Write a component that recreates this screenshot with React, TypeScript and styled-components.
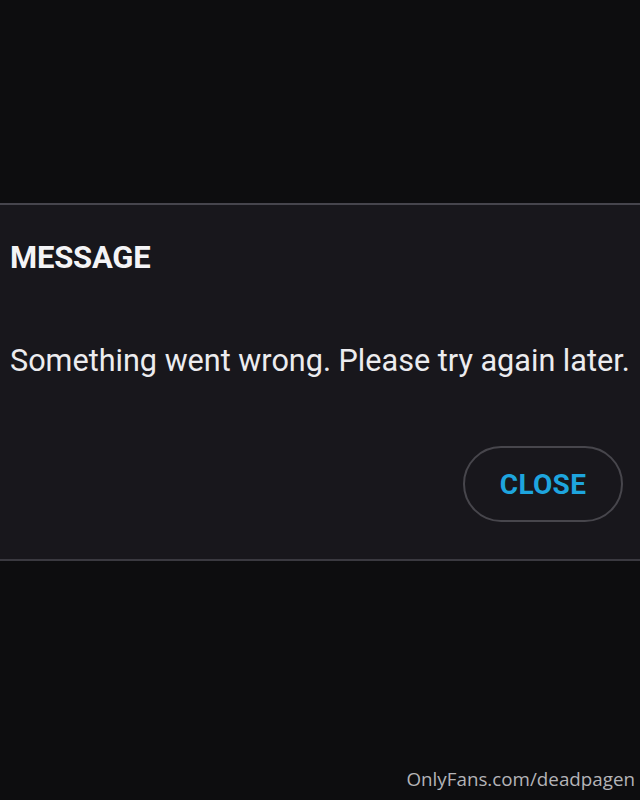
import React from 'react';
import styled, { createGlobalStyle } from 'styled-components';

const GlobalStyle = createGlobalStyle`
  html, body {
    margin: 0;
    padding: 0;
    background: #0d0d0f;
  }
  #root {
    width: 640px;
    height: 800px;
  }
`;

const Screen = styled.div`
  position: relative;
  width: 640px;
  height: 800px;
  background: #0d0d0f;
  display: flex;
  flex-direction: column;
  padding-top: 203px;
  box-sizing: border-box;
  overflow: hidden;
`;

const Dialog = styled.section`
  background: #18171c;
  border-top: 2px solid #46454d;
  border-bottom: 2px solid #3a3940;
  height: 358px;
  box-sizing: border-box;
  padding: 33px 10px 0 10px;
  display: flex;
  flex-direction: column;
  font-family: Roboto, 'Liberation Sans', sans-serif;
`;

const Title = styled.h2`
  margin: 0;
  color: #f4f4f6;
  font-size: 31px;
  font-weight: 700;
  letter-spacing: -0.2px;
  line-height: 40px;
`;

const Body = styled.p`
  margin: 63px 0 0 0;
  color: #ececef;
  font-size: 30.6px;
  font-weight: 400;
  line-height: 40px;
  white-space: nowrap;
`;

const Actions = styled.div`
  display: flex;
  justify-content: flex-end;
  margin-top: 65px;
  padding-right: 7px;
`;

const PillButton = styled.button`
  width: 160px;
  height: 76px;
  border-radius: 38px;
  border: 2px solid #47464c;
  background: transparent;
  color: #1ea5de;
  font-family: Roboto, 'Liberation Sans', sans-serif;
  font-size: 28px;
  font-weight: 700;
  letter-spacing: 0.3px;
  cursor: pointer;
`;

const Watermark = styled.span`
  position: absolute;
  right: 5px;
  bottom: 8px;
  color: #b4b4b8;
  font-family: 'Open Sans', 'DejaVu Sans', sans-serif;
  font-size: 18.8px;
`;

export default function App() {
  return (
    <>
      <GlobalStyle />
      <Screen>
        <Dialog>
          <Title>MESSAGE</Title>
          <Body>Something went wrong. Please try again later.</Body>
          <Actions>
            <PillButton>CLOSE</PillButton>
          </Actions>
        </Dialog>
        <Watermark>OnlyFans.com/deadpagen</Watermark>
      </Screen>
    </>
  );
}
